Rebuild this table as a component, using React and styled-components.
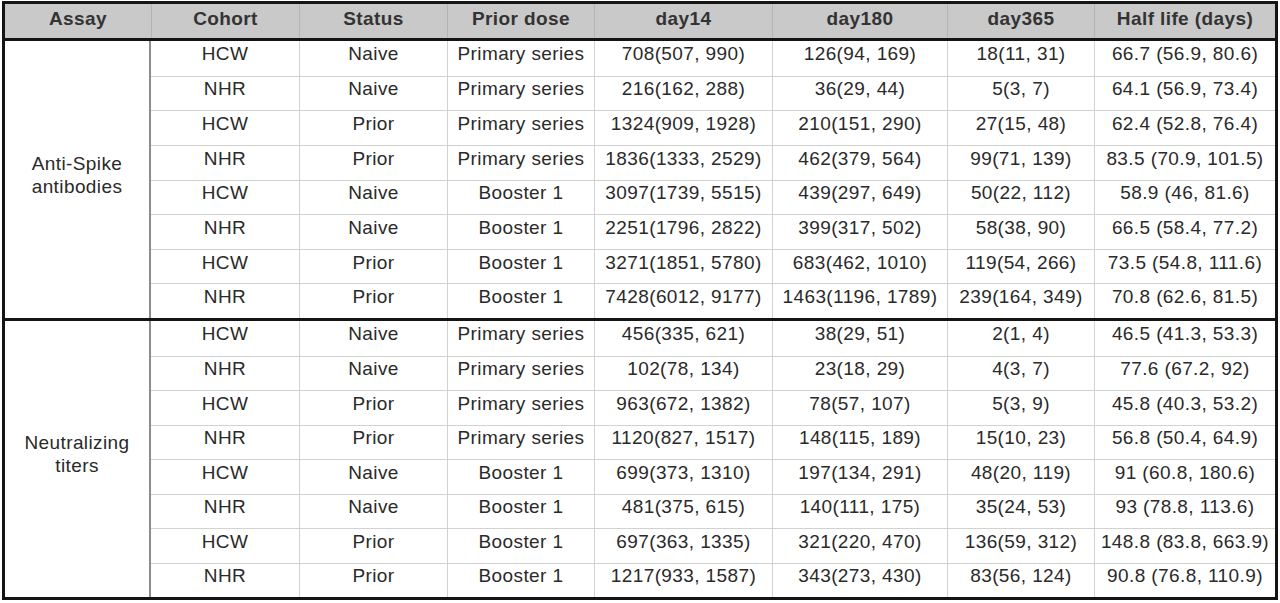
import React from 'react';
import styled, { createGlobalStyle } from 'styled-components';

const GlobalStyle = createGlobalStyle`
  html, body {
    margin: 0;
    padding: 0;
    background: #ffffff;
  }
  body {
    font-family: "Liberation Sans", Arial, sans-serif;
  }
`;

const COLUMNS = '146px 148px 148px 147px 178px 175px 147px 1fr';

const Frame = styled.div`
  box-sizing: border-box;
  width: 1276px;
  margin: 1px 0 0 2px;
  border: 3px solid #141414;
  color: #2a2a2a;
  font-size: 19px;
  letter-spacing: 0.4px;
`;

const HeaderRow = styled.div`
  display: grid;
  grid-template-columns: ${COLUMNS};
  height: 34px;
  background: #c9c9c9;
  border-bottom: 3px solid #141414;
`;

const HeadCell = styled.div`
  display: flex;
  align-items: center;
  justify-content: center;
  padding-bottom: 5px;
  box-sizing: border-box;
  font-weight: bold;
  color: #333333;
  border-left: ${(p) => (p.$first ? 'none' : '1px solid #b4b4b4')};
`;

const Group = styled.div`
  display: grid;
  grid-template-columns: ${COLUMNS};
  grid-template-rows: repeat(8, 1fr);
  height: ${(p) => p.$height}px;
  & + & {
    border-top: 3px solid #141414;
  }
`;

const AssayCell = styled.div`
  grid-row: 1 / span 8;
  grid-column: 1;
  display: flex;
  align-items: center;
  justify-content: center;
  text-align: center;
  line-height: 23px;
  padding-bottom: 10px;
  box-sizing: border-box;
  border-right: 2px solid #8c8c8c;
`;

const Cell = styled.div`
  display: flex;
  align-items: center;
  justify-content: center;
  white-space: nowrap;
  padding-bottom: 8px;
  box-sizing: border-box;
  border-left: ${(p) => (p.$col > 1 ? '1px solid #d2d2d2' : 'none')};
  border-top: ${(p) => (p.$row > 0 ? '1px solid #d2d2d2' : 'none')};
`;

const headers = ['Assay', 'Cohort', 'Status', 'Prior dose', 'day14', 'day180', 'day365', 'Half life (days)'];

const groups = [
  {
    assay: ['Anti-Spike', 'antibodies'],
    height: 277,
    rows: [
      ['HCW', 'Naive', 'Primary series', '708(507, 990)', '126(94, 169)', '18(11, 31)', '66.7 (56.9, 80.6)'],
      ['NHR', 'Naive', 'Primary series', '216(162, 288)', '36(29, 44)', '5(3, 7)', '64.1 (56.9, 73.4)'],
      ['HCW', 'Prior', 'Primary series', '1324(909, 1928)', '210(151, 290)', '27(15, 48)', '62.4 (52.8, 76.4)'],
      ['NHR', 'Prior', 'Primary series', '1836(1333, 2529)', '462(379, 564)', '99(71, 139)', '83.5 (70.9, 101.5)'],
      ['HCW', 'Naive', 'Booster 1', '3097(1739, 5515)', '439(297, 649)', '50(22, 112)', '58.9 (46, 81.6)'],
      ['NHR', 'Naive', 'Booster 1', '2251(1796, 2822)', '399(317, 502)', '58(38, 90)', '66.5 (58.4, 77.2)'],
      ['HCW', 'Prior', 'Booster 1', '3271(1851, 5780)', '683(462, 1010)', '119(54, 266)', '73.5 (54.8, 111.6)'],
      ['NHR', 'Prior', 'Booster 1', '7428(6012, 9177)', '1463(1196, 1789)', '239(164, 349)', '70.8 (62.6, 81.5)'],
    ],
  },
  {
    assay: ['Neutralizing', 'titers'],
    height: 276,
    rows: [
      ['HCW', 'Naive', 'Primary series', '456(335, 621)', '38(29, 51)', '2(1, 4)', '46.5 (41.3, 53.3)'],
      ['NHR', 'Naive', 'Primary series', '102(78, 134)', '23(18, 29)', '4(3, 7)', '77.6 (67.2, 92)'],
      ['HCW', 'Prior', 'Primary series', '963(672, 1382)', '78(57, 107)', '5(3, 9)', '45.8 (40.3, 53.2)'],
      ['NHR', 'Prior', 'Primary series', '1120(827, 1517)', '148(115, 189)', '15(10, 23)', '56.8 (50.4, 64.9)'],
      ['HCW', 'Naive', 'Booster 1', '699(373, 1310)', '197(134, 291)', '48(20, 119)', '91 (60.8, 180.6)'],
      ['NHR', 'Naive', 'Booster 1', '481(375, 615)', '140(111, 175)', '35(24, 53)', '93 (78.8, 113.6)'],
      ['HCW', 'Prior', 'Booster 1', '697(363, 1335)', '321(220, 470)', '136(59, 312)', '148.8 (83.8, 663.9)'],
      ['NHR', 'Prior', 'Booster 1', '1217(933, 1587)', '343(273, 430)', '83(56, 124)', '90.8 (76.8, 110.9)'],
    ],
  },
];

const App = () => (
  <>
    <GlobalStyle />
    <Frame>
      <HeaderRow>
        {headers.map((h, i) => (
          <HeadCell key={h} $first={i === 0}>{h}</HeadCell>
        ))}
      </HeaderRow>
      {groups.map((g) => (
        <Group key={g.assay[0]} $height={g.height}>
          <AssayCell>
            {g.assay[0]}
            <br />
            {g.assay[1]}
          </AssayCell>
          {g.rows.map((row, r) =>
            row.map((val, c) => (
              <Cell
                key={`${r}-${c}`}
                $row={r}
                $col={c + 1}
                style={{ gridRow: r + 1, gridColumn: c + 2 }}
              >
                {val}
              </Cell>
            ))
          )}
        </Group>
      ))}
    </Frame>
  </>
);

export default App;
